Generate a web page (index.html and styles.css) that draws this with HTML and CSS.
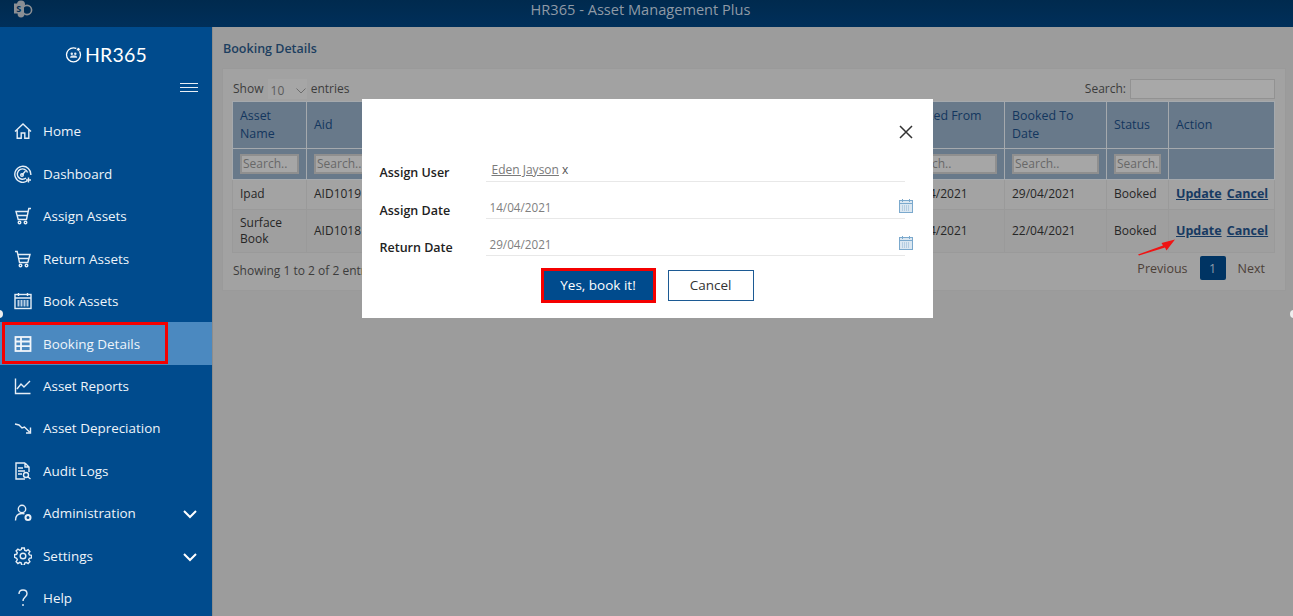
FILE: index.html
```html
<!DOCTYPE html>
<html lang="en">
<head>
<meta charset="utf-8">
<title>HR365 - Asset Management Plus</title>
<link rel="stylesheet" href="styles.css">
</head>
<body>
<header class="topbar">
  <svg class="sp-logo" width="19" height="18" viewBox="0 0 19 18"><circle cx="7" cy="4.5" r="4" fill="#8b8f94"/><circle cx="13" cy="10" r="4.6" fill="none" stroke="#8b8f94" stroke-width="1.6"/><circle cx="7" cy="14" r="3.4" fill="#8b8f94"/><rect x="0" y="3.5" width="10" height="10" fill="#8b8f94"/><text x="2.2" y="12" class="sp-s">S</text></svg>
  <div class="app-title">HR365 - Asset Management Plus</div>
</header>
<div class="shell">
  <aside class="sidebar">
    <div class="brand">
      <svg width="17" height="17" viewBox="0 0 17 17" fill="none"><circle cx="8.5" cy="8.800" r="7" stroke="#fff" stroke-width="1.300"/><circle cx="13.400" cy="3.400" r="1.900" fill="#fff" stroke="#004b8d"/><circle cx="6.800" cy="7.800" r="1.200" fill="#dfe9f3"/><circle cx="10.300" cy="7.800" r="1.200" fill="#dfe9f3"/><path d="M5 11.800c.3-1.700 1-2.400 1.900-2.400h3.400c.9 0 1.600.7 1.900 2.400z" fill="#dfe9f3"/></svg>
      <span class="brand-name">HR365</span>
    </div>
    <div class="hamburger-row"><span class="hamburger"></span></div>
    <nav class="nav">
      <a class="nav-item"><svg class="ico" viewBox="0 0 18 18"><path d="M1 9.500 9 2l8 7.500M3.200 8v8.200h4V11h3.600v5.200h4V8"/></svg><span>Home</span></a>
      <a class="nav-item"><svg class="ico" viewBox="0 0 18 18"><path d="M13.500 15.800A8 8 0 1 1 16.800 10M13.500 7.500A5.200 5.200 0 1 0 12 13"/><path d="m8 10 3.500-4"/><circle cx="8" cy="10" r="1.300"/><path d="M14.500 12.500v5M12 15h5"/></svg><span>Dashboard</span></a>
      <a class="nav-item"><svg class="ico" viewBox="0 0 18 18"><path d="M17 1.500h-2.200L12.500 12.500H4.200L2 4.500h12M3 8.500h10.300"/><circle cx="5.500" cy="15.500" r="1.300"/><circle cx="11.500" cy="15.500" r="1.300"/></svg><span>Assign Assets</span></a>
      <a class="nav-item"><svg class="ico" viewBox="0 0 18 18"><path d="M1 1.500h2.200l2.300 11h8.300L16 4.500H4M5 8.500h10"/><circle cx="6.500" cy="15.500" r="1.300"/><circle cx="12.500" cy="15.500" r="1.300"/></svg><span>Return Assets</span></a>
      <a class="nav-item"><svg class="ico" viewBox="0 0 18 18"><rect x="1" y="2.500" width="16" height="14"/><path d="M1 6h16M4.500 1v3M13.500 1v3"/><path class="thick" d="M4.500 8v6.500M7.500 8v6.500M10.500 8v6.500M13.500 8v6.500"/></svg><span>Book Assets</span></a>
      <a class="nav-item active"><svg class="ico heavy" viewBox="0 0 18 18"><rect x="1.500" y="2" width="15" height="14"/><path d="M1.500 6.500h15M1.500 11.200h15M7 2v14"/></svg><span>Booking Details</span><i class="mark"></i></a>
      <a class="nav-item"><svg class="ico" viewBox="0 0 18 18"><path d="M1.500 1.500v15h15M3 12l4-5 3 3 6-6"/></svg><span>Asset Reports</span></a>
      <a class="nav-item"><svg class="ico" viewBox="0 0 18 18"><path d="M1 5l4 1 3 3 2.500-1 5 5M16.500 8.500V14H12"/></svg><span>Asset Depreciation</span></a>
      <a class="nav-item"><svg class="ico" viewBox="0 0 18 18"><path d="M11 1H2v16h9M11 1l4 4v5M11 1v4h4M4 6h5M4 9h7M4 12h4"/><circle cx="12" cy="13" r="2.500"/><path d="m14 15 2.500 2"/></svg><span>Audit Logs</span></a>
      <a class="nav-item"><svg class="ico" viewBox="0 0 18 18"><circle cx="8" cy="5" r="3.700"/><path d="M1.500 16.500c0-4.500 2.500-7 6.500-7 1 0 1.800.1 2.500.4"/><circle cx="14" cy="13.500" r="2.500" stroke-width="2"/></svg><span>Administration</span><svg class="chev" viewBox="0 0 14 9"><path d="m1 1 6 6 6-6"/></svg></a>
      <a class="nav-item"><svg class="ico" viewBox="0 0 18 18"><circle cx="9" cy="9" r="2.800"/><path d="M7.700 1h2.600l.4 2.200 1.500.7 1.900-1.200 1.800 1.800-1.200 1.900.7 1.500 2.100.4v2.600l-2.100.4-.7 1.500 1.200 1.900-1.800 1.800-1.900-1.200-1.500.7-.4 2.200H7.700l-.4-2.200-1.500-.7-1.900 1.200-1.800-1.800 1.200-1.900-.7-1.500L.5 10.300V7.700l2.100-.4.7-1.500-1.200-1.900 1.800-1.800 1.900 1.200 1.500-.7z"/></svg><span>Settings</span><svg class="chev" viewBox="0 0 14 9"><path d="m1 1 6 6 6-6"/></svg></a>
      <a class="nav-item"><svg class="ico" viewBox="0 0 18 18"><path d="M5 5c0-2.500 1.800-4 4-4s4 1.500 4 3.700c0 3.300-4 3.500-4 7.300M9 15v2"/></svg><span>Help</span></a>
    </nav>
  </aside>
  <main class="content">
    <h1 class="page-title">Booking Details</h1>
    <section class="panel">
      <div class="table-top">
        <div class="length">Show <span class="select">10<svg width="10" height="6" viewBox="0 0 10 6"><path d="m.5.500 4.500 4.500L9.500.500"/></svg></span> entries</div>
        <div class="search-box">Search: <span class="search-field"></span></div>
      </div>
      <table class="grid">
        <colgroup><col class="c-name"><col class="c-aid"><col class="c-gap"><col class="c-from"><col class="c-to"><col class="c-status"><col class="c-action"></colgroup>
        <thead>
          <tr class="head"><th>Asset Name</th><th>Aid</th><th></th><th>Booked From Date</th><th>Booked To Date</th><th>Status</th><th>Action</th></tr>
          <tr class="filter"><th><span class="f-input">Search..</span></th><th><span class="f-input">Search..</span></th><th></th><th><span class="f-input">Search..</span></th><th><span class="f-input">Search..</span></th><th><span class="f-input">Search..</span></th><th></th></tr>
        </thead>
        <tbody>
          <tr class="r1"><td>Ipad</td><td>AID1019</td><td></td><td>14/04/2021</td><td>29/04/2021</td><td>Booked</td><td class="acts"><a>Update</a> <a>Cancel</a></td></tr>
          <tr class="r2"><td>Surface Book</td><td>AID1018</td><td></td><td>14/04/2021</td><td>22/04/2021</td><td>Booked</td><td class="acts"><a>Update</a> <a>Cancel</a></td></tr>
        </tbody>
      </table>
      <div class="table-bottom">
        <div class="info">Showing 1 to 2 of 2 entries</div>
        <div class="pager"><span>Previous</span><b class="page-num">1</b><span>Next</span></div>
      </div>
    </section>
  </main>
</div>
<svg class="arrow" width="40" height="18" viewBox="0 0 40 18"><path d="M1 16.500 26 7.500l-1.500-2.500L38 1.500l-8.500 11-1.500-3L2 17.500z" fill="#f01414"/></svg>
<i class="pin pin-l"></i><i class="pin pin-r"></i>
<div class="modal">
  <svg class="close" width="14" height="14" viewBox="0 0 14 14"><path d="m1 1 12 12M13 1 1 13"/></svg>
  <div class="form">
    <div class="form-row"><label>Assign User</label><div class="field user"><u>Eden Jayson</u> <span class="x">x</span></div></div>
    <div class="form-row"><label class="low">Assign Date</label><div class="field">14/04/2021<svg class="cal" width="14" height="14" viewBox="0 0 14 14"><rect x=".5" y="1.500" width="13" height="12" fill="#dbe7f1" stroke="#7ba9cd"/><path d="M.5 4.500h13M3.500 0v3M10.500 0v3" stroke="#7ba9cd"/><path d="M3 7h8M3 9h8M3 11h8" stroke="#8fb4d2" stroke-dasharray="1 1"/></svg></div></div>
    <div class="form-row"><label class="low">Return Date</label><div class="field">29/04/2021<svg class="cal" width="14" height="14" viewBox="0 0 14 14"><rect x=".5" y="1.500" width="13" height="12" fill="#dbe7f1" stroke="#7ba9cd"/><path d="M.5 4.500h13M3.500 0v3M10.500 0v3" stroke="#7ba9cd"/><path d="M3 7h8M3 9h8M3 11h8" stroke="#8fb4d2" stroke-dasharray="1 1"/></svg></div></div>
  </div>
  <div class="actions"><button class="btn-yes">Yes, book it!</button><button class="btn-no">Cancel</button></div>
</div>
</body>
</html>
```
FILE: styles.css
```css
* { box-sizing: border-box; }
html, body { margin: 0; height: 100%; overflow: hidden; }
body { font-family: "Open Sans", "Noto Sans", sans-serif; font-size: 12px; background: #9c9c9c; color: #2b2b2b; position: relative; width: 1293px; height: 616px; }

.topbar { height: 27px; background: linear-gradient(#002a4e, #002f5a); position: relative; display: flex; align-items: center; justify-content: center; }
.sp-logo { position: absolute; left: 14px; top: 0; }
.sp-s { font-size: 9px; font-weight: 700; fill: #002d55; }
.app-title { color: #8f9aa6; font-size: 14.6px; margin-top: -9px; padding-right: 12px; }

.shell { display: flex; height: 589px; overflow: hidden; }
.sidebar { width: 213px; flex: none; background: #004b8d; border-right: 1px solid #8d8d8d; display: flex; flex-direction: column; color: #fff; }
.brand { height: 54px; flex: none; padding: 17px 0 0 0; display: flex; justify-content: center; align-items: flex-start; gap: 3px; }
.brand svg { margin-top: 2px; }
.brand-name { font-family: "Lato", sans-serif; font-size: 19.5px; line-height: 21px; letter-spacing: .2px; }
.hamburger-row { height: 29.2px; flex: none; display: flex; justify-content: flex-end; padding: 2px 14px 0 0; }
.hamburger { width: 18px; height: 9px; border-top: 1px solid #e8eef5; border-bottom: 1px solid #e8eef5; position: relative; }
.hamburger::after { content: ""; position: absolute; left: 0; right: 0; top: 3px; border-top: 1px solid #e8eef5; }
.nav { display: flex; flex-direction: column; flex: none; }
.nav-item { height: 42.45px; flex: none; display: flex; align-items: center; padding-left: 14px; font-size: 13.45px; position: relative; color: #eef4fa; }
.nav-item > span { margin-left: 11px; }
.nav-item.active { background: #4b89c0; }
.ico { width: 18px; height: 18px; fill: none; stroke: #e6eef6; stroke-width: 1.4; flex: none; }
.ico .thick { stroke-width: 2; stroke: #b8cfe4; }
.ico.heavy { stroke: #f2f6fa; stroke-width: 1.8; }
.chev { position: absolute; right: 15px; top: 18px; width: 14px; height: 9px; fill: none; stroke: #fff; stroke-width: 2; }
.mark { position: absolute; left: 2px; top: 0; width: 166px; height: 42px; border: 3px solid #f40000; }

.content { flex: 1; padding: 0 7px 0 9px; }
.page-title { margin: 14px 0 12px 1px; font-size: 12.5px; line-height: 15px; font-weight: 600; color: #1d3f60; }
.panel { height: 223px; background: #a2a2a2; border: 1px solid #9a9a9a; padding: 9px 10px 0 9px; }
.table-top { display: flex; justify-content: space-between; height: 23px; color: #3c3c3c; padding: 1px 0 0 1px; }
.select { display: inline-flex; align-items: center; justify-content: space-between; width: 39px; height: 20px; padding: 3px 1px 0 3px; margin: 0 1px; background: #a6a6a6; color: #5b5b5b; vertical-align: top; }
.select svg { fill: none; stroke: #6c6c6c; }
.length { line-height: 20px; }
.search-box { display: flex; gap: 4px; line-height: 20px; height: 20px; }
.search-field { width: 145px; height: 20px; border: 1px solid #929292; background: #a8a8a8; }
.grid { table-layout: fixed; width: 1042px; border-collapse: collapse; }
.c-name { width: 74px; } .c-aid { width: 78px; } .c-gap { width: 512px; } .c-from { width: 108px; } .c-to { width: 102px; } .c-status { width: 62px; } .c-action { width: 106px; }
.grid th { background: #68798a; color: #13365e; font-weight: 400; font-size: 12.4px; text-align: left; padding: 0 7px; border: 1px solid #a5a9ad; line-height: 18.5px; }
.head th { height: 47px; }
.filter th { height: 31px; }
.f-input { display: block; height: 20px; width: 100%; background: #a6a6a6; border: 2px solid #8f8f8f; color: #686868; padding-left: 1px; font-size: 12px; line-height: 16px; white-space: nowrap; overflow: hidden; }
.grid td { padding: 0 7px; border: 1px solid #9a9a9a; line-height: 16.5px; color: #262626; }
.r1 td { height: 30px; background: #a3a3a3; }
.r2 td { height: 43px; background: #9f9f9f; }
.acts { white-space: nowrap; }
.acts a { font-weight: 700; font-size: 12.5px; text-decoration: underline; color: #173a62; margin-right: 2px; }
.table-bottom { display: flex; justify-content: space-between; align-items: flex-start; margin-top: 3px; height: 27px; color: #3c3c3c; padding-left: 1px; }
.info { padding-top: 6px; }
.pager { display: flex; align-items: center; gap: 12px; font-size: 12.5px; padding-right: 10px; color: #4c4038; }
.page-num { width: 26px; height: 24px; background: #003463; color: #8f9dab; font-weight: 400; border-radius: 2px; display: flex; align-items: center; justify-content: center; }

.arrow { position: absolute; left: 1137px; top: 238px; }
.pin { position: absolute; top: 310px; width: 8px; height: 8px; border-radius: 50%; background: #eee; }
.pin-l { left: -5px; }
.pin-r { right: -5px; }

.modal { position: absolute; left: 362px; top: 99px; width: 571px; height: 219px; background: #fff; }
.close { position: absolute; left: 537px; top: 26px; fill: none; stroke: #333; stroke-width: 1.5; }
.form { padding: 58px 0 0 17.5px; }
.form-row { display: flex; height: 37px; }
.form-row label { width: 106px; padding-top: 7px; font-size: 12.5px; line-height: 17px; font-weight: 600; color: #222; }
.form-row label.low { padding-top: 8px; }
.field { width: 419px; height: 25px; border-bottom: 1px solid #e8e8e8; padding: 5px 0 0 4px; color: #7f7f7f; font-size: 11.7px; line-height: 16px; position: relative; }
.field.user { color: #777; padding-left: 6px; font-size: 12px; }
.field.user u { color: #7a7a7a; }
.field.user .x { color: #555; }
.cal { position: absolute; right: -8px; top: 5px; }
.actions { display: flex; justify-content: center; gap: 12px; padding-right: 1px; }
.btn-yes, .btn-no { font-family: inherit; font-size: 13.5px; height: 35px; padding: 0 0 2px; }
.btn-yes { width: 115px; background: #004b8d; color: #fff; border: 3px solid #f40000; }
.btn-no { width: 86px; height: 31px; margin-top: 2px; background: #fff; color: #333; border: 1px solid #1c5a94; }
```
